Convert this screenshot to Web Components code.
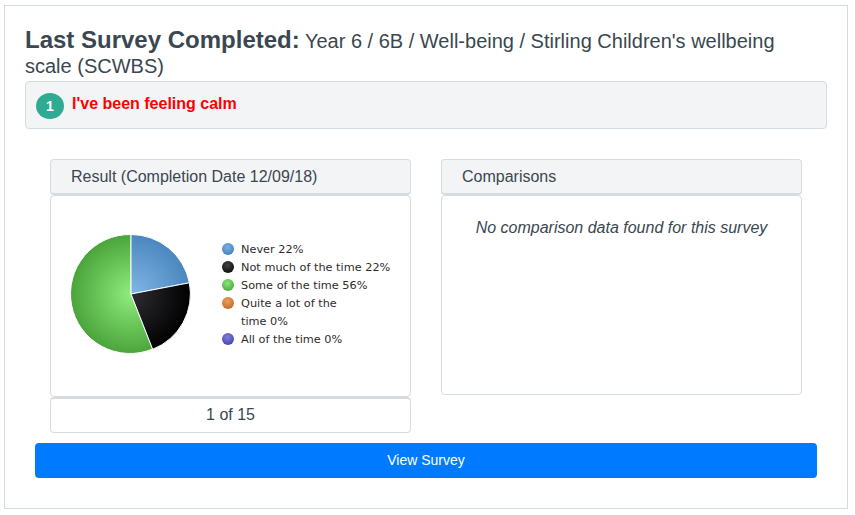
<!DOCTYPE html>
<html lang="en"><head><meta charset="utf-8"><title>Survey</title>
<style>
html,body{margin:0;background:#fff;font-family:"Liberation Sans",Arial,sans-serif;color:#3a4750}
body{padding:5px 7px 6px 4px;height:515px;box-sizing:border-box}
</style></head><body>
<survey-panel>
  <span slot="lead">Last Survey Completed:</span>
  <span slot="title">Year 6 / 6B / Well-being / Stirling Children's wellbeing</span>
  <span slot="title2">scale (SCWBS)</span>
  <question-bar number="1">I've been feeling calm</question-bar>
  <div slot="cards">
    <info-card heading="Result (Completion Date 12/09/18)" height="202" footer="1 of 15">
      <result-chart></result-chart>
    </info-card>
    <info-card heading="Comparisons" height="200"><em>No comparison data found for this survey</em></info-card>
  </div>
  <span slot="action">View Survey</span>
</survey-panel>
<script>
function define(name, html, extra){
  customElements.define(name, class extends HTMLElement{
    constructor(){super();this.attachShadow({mode:'open'}).innerHTML=html;}
    connectedCallback(){ if(extra) extra(this); }
  });
}
define('survey-panel',`<style>
:host{display:block;box-sizing:border-box;height:504px;border:1px solid #d5dce1;padding:21px 20px 0}
h1{margin:0 0 2px;padding-right:25px;font-size:20px;line-height:25px;font-weight:400;color:#3a4750}
b{font-size:24px;font-weight:700}
.cards{margin:30px 25px 0 25px}
::slotted([slot=cards]){display:grid;grid-template-columns:361px 361px;column-gap:30px;align-items:start}
button{display:block;width:782px;height:35px;margin:10px 0 0 10px;border:0;border-radius:4px;background:#007bff;color:#fff;font:14px/35px "Liberation Sans",Arial,sans-serif;padding:0}
</style>
<h1><b><slot name="lead"></slot></b> <slot name="title"></slot> <slot name="title2"></slot></h1>
<slot></slot>
<div class="cards"><slot name="cards"></slot></div>
<button><slot name="action"></slot></button>`);
define('question-bar',`<style>
:host{display:flex;align-items:center;box-sizing:border-box;height:48px;padding:0 10px;gap:8px;background:#f3f4f6;border:1px solid #d5dce1;border-radius:4px;color:#f00;font-weight:700;font-size:16px}
i{flex:none;display:grid;place-items:center;width:28px;height:26px;border-radius:50%;background:#2fab94;color:#fff;font-style:normal;font-size:14px;margin-top:1px}
span{margin-top:-2px}
</style><i></i><span><slot></slot></span>`,el=>{el.shadowRoot.querySelector('i').textContent=el.getAttribute('number')});
define('info-card',`<style>
:host{display:block;color:#3a4750;font-size:16px}
header{box-sizing:border-box;height:36px;line-height:34px;padding:0 20px;background:#f3f4f6;border:1px solid #d5dce1;border-bottom:2px solid #d5dce1;border-radius:4px}
section{box-sizing:border-box;border:1px solid #d5dce1;border-radius:4px;text-align:center;padding-top:22px;line-height:20px}
footer{box-sizing:border-box;height:36px;line-height:32px;text-align:center;border:1px solid #d5dce1;border-top:2px solid #d5dce1;border-radius:4px}
footer:empty{display:none}
</style><header></header><section><slot></slot></section><footer></footer>`,el=>{
  const s=el.shadowRoot;
  s.querySelector('header').textContent=el.getAttribute('heading');
  s.querySelector('section').style.height=el.getAttribute('height')+'px';
  s.querySelector('footer').textContent=el.getAttribute('footer')||'';
});
define('result-chart',`<style>
:host{display:flex;align-items:flex-start;text-align:left;margin-top:16px;padding-left:20px;gap:31px}
svg{flex:none;display:block}
ul{list-style:none;margin:0;padding:7px 0 0;font:11.3px/18px "DejaVu Sans",Verdana,sans-serif;color:#2f2b2b;width:175px}
li{position:relative;padding-left:19px}
li::before{content:"";position:absolute;left:0;top:2px;width:12px;height:12px;border-radius:50%;background:radial-gradient(circle at 45% 35%,var(--l),var(--c) 70%)}
</style>
<svg width="120" height="120" viewBox="-60 -60 120 120" aria-hidden="true">
<defs>
<radialGradient id="b" gradientUnits="userSpaceOnUse" cx="0" cy="0" r="60"><stop offset="0" stop-color="#82b7e8"/><stop offset="1" stop-color="#4a86bd"/></radialGradient>
<radialGradient id="k" gradientUnits="userSpaceOnUse" cx="0" cy="0" r="60"><stop offset="0" stop-color="#2e2e33"/><stop offset="1" stop-color="#000"/></radialGradient>
<radialGradient id="g" gradientUnits="userSpaceOnUse" cx="0" cy="0" r="60"><stop offset="0" stop-color="#90ec7d"/><stop offset="1" stop-color="#4aa43a"/></radialGradient>
</defs>
<g stroke="#fff" stroke-width="1" stroke-linejoin="round">
<path fill="url(#g)" d="M0 0L21.7 55A59.5 59.5 0 1 1 0-59.5Z"/>
<path fill="url(#b)" d="M0 0V-59.5A59.5 59.5 0 0 1 58.4-11.2Z"/>
<path fill="url(#k)" d="M0 0L58.4-11.2A59.5 59.5 0 0 1 21.7 55.3Z"/>
</g></svg>
<ul>
<li style="--c:#4a86bd;--l:#7cb0e0">Never 22%</li>
<li style="--c:#141414;--l:#444">Not much of the time 22%</li>
<li style="--c:#55b043;--l:#8ae47a">Some of the time 56%</li>
<li style="--c:#c8702a;--l:#eda05e">Quite a lot of the<br>time 0%</li>
<li style="--c:#4a4db0;--l:#7f80da">All of the time 0%</li>
</ul>`);
</script>
</body></html>
